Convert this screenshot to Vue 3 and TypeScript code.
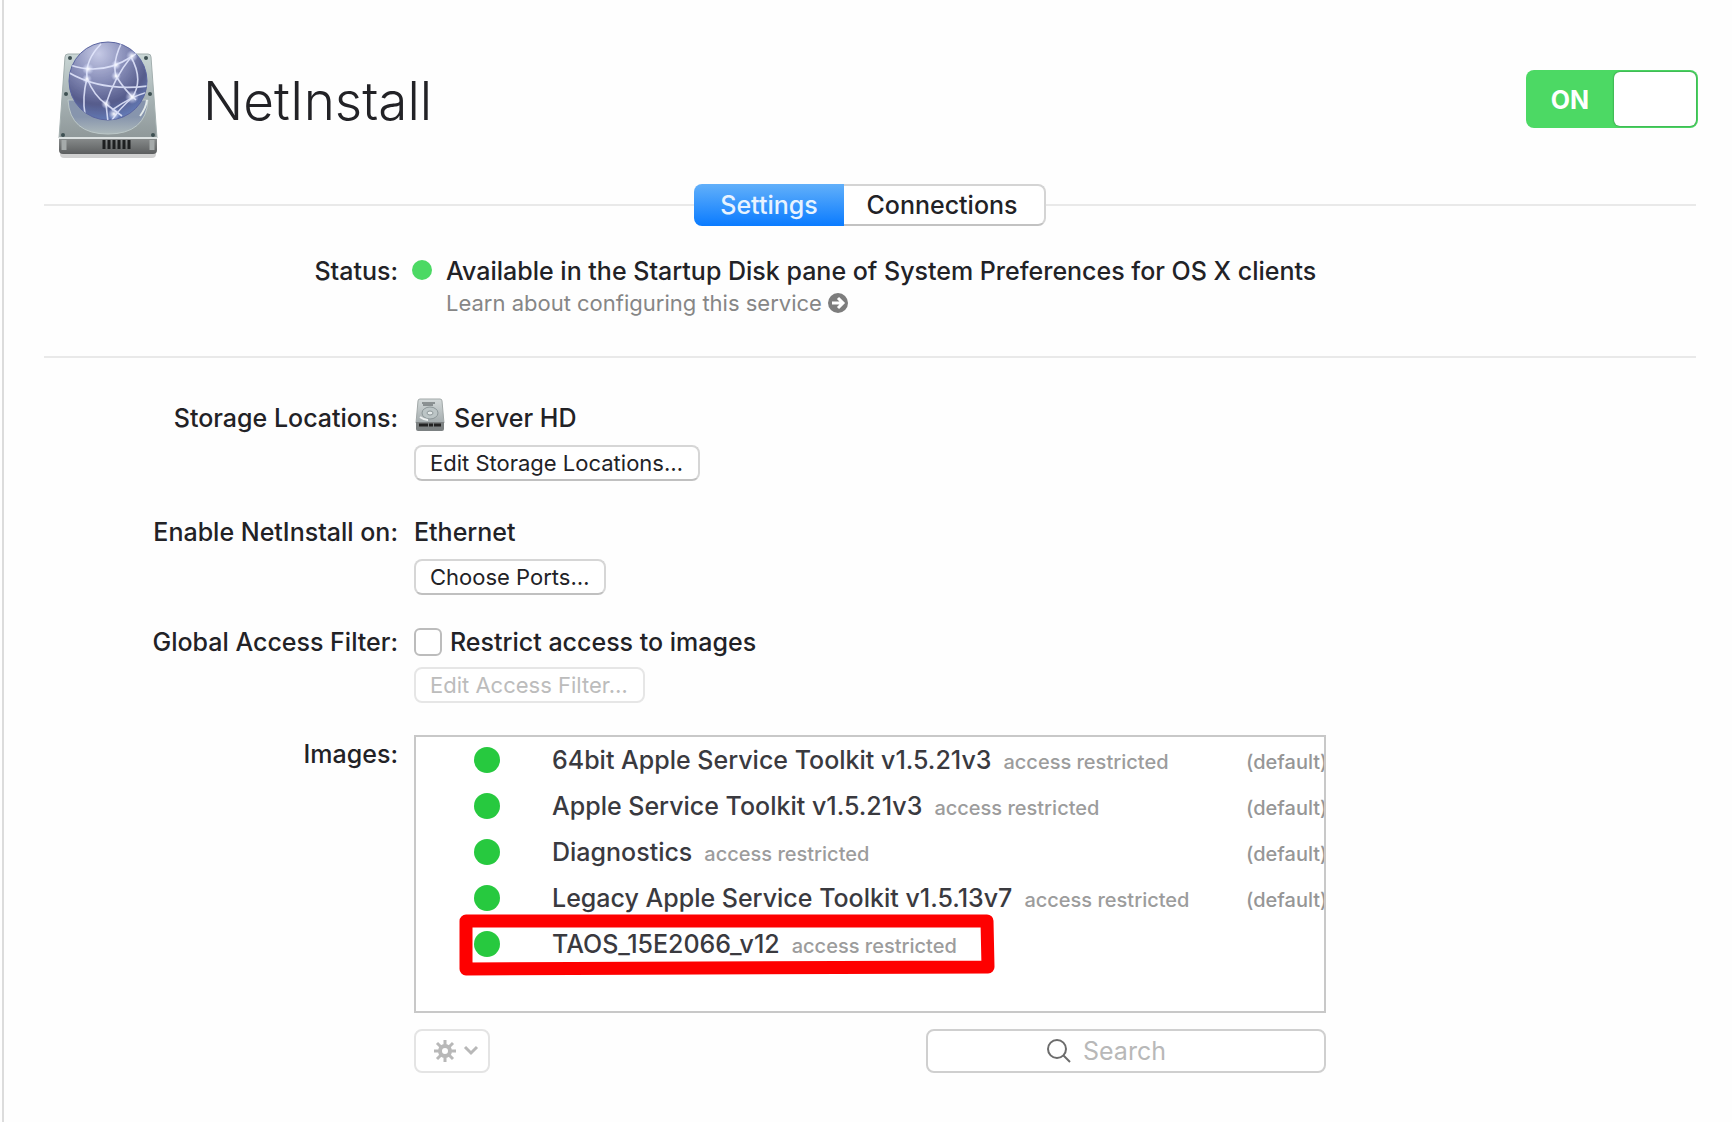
<script setup lang="ts">
import { ref } from 'vue'

interface BootImage {
  name: string
  isDefault: boolean
}

const enabled = ref(true)
const restrict = ref(false)
const query = ref('')
const tab = ref('Settings')
const tabs: string[] = ['Settings', 'Connections']

const images: BootImage[] = [
  { name: '64bit Apple Service Toolkit v1.5.21v3', isDefault: true },
  { name: 'Apple Service Toolkit v1.5.21v3', isDefault: true },
  { name: 'Diagnostics', isDefault: true },
  { name: 'Legacy Apple Service Toolkit v1.5.13v7', isDefault: true },
  { name: 'TAOS_15E2066_v12', isDefault: false },
]
</script>

<template>
  <main class="pane">
    <header class="head">
      <svg class="logo" viewBox="0 0 104 124" aria-hidden="true">
        <defs>
          <linearGradient id="plate" x1="0" y1="0" x2="0" y2="1">
            <stop offset="0" stop-color="#c9d6d5" />
            <stop offset="0.6" stop-color="#a3aeb0" />
            <stop offset="1" stop-color="#8f9899" />
          </linearGradient>
          <linearGradient id="front" x1="0" y1="0" x2="0" y2="1">
            <stop offset="0" stop-color="#8b8f8f" />
            <stop offset="1" stop-color="#5c5e5f" />
          </linearGradient>
          <linearGradient id="ring" x1="0" y1="0" x2="0" y2="1">
            <stop offset="0.5" stop-color="#8795ad" />
            <stop offset="1" stop-color="#adb9bb" />
          </linearGradient>
          <radialGradient id="globe" cx="0.38" cy="0.15" r="0.9">
            <stop offset="0" stop-color="#c6cae6" />
            <stop offset="0.38" stop-color="#8a90ba" />
            <stop offset="0.72" stop-color="#565c8c" />
            <stop offset="1" stop-color="#6680bd" />
          </radialGradient>
          <radialGradient id="spark">
            <stop offset="0" stop-color="#fff" />
            <stop offset="1" stop-color="#cfd8ff" stop-opacity="0" />
          </radialGradient>
          <clipPath id="ball"><circle cx="52" cy="43" r="39" /></clipPath>
        </defs>
        <rect x="4" y="112" width="96" height="8" rx="4" fill="#000" opacity="0.18" />
        <path d="M12 16h80q3 0 3 3l6 81H3l6-81q0-3 3-3z" fill="url(#plate)" stroke="#a3afaf" />
        <path d="M12 62q2 34 40 34t40-34z" fill="url(#ring)" stroke="#bcc8c8" stroke-width="1" />
        <path d="M84 78q6-8 7-16" fill="none" stroke="#e3eaea" stroke-width="2" />
        <path d="M3 99h98v13q0 4-4 4H7q-4 0-4-4z" fill="url(#front)" />
        <path d="M3 100h98" stroke="#dde2e2" stroke-width="2" />
        <path d="M8 102v10M96 102v10" stroke="#a5aaaa" stroke-width="5" />
        <path d="M48 102v9M53 102v9M58 102v9M63 102v9M68 102v9M73 102v9" stroke="#1d1f20" stroke-width="3" />
        <g fill="#3e5052">
          <circle cx="14" cy="20" r="2" /><circle cx="90" cy="20" r="2" />
          <circle cx="10" cy="56" r="2" /><circle cx="94" cy="56" r="2" />
          <circle cx="7" cy="97" r="2" /><circle cx="97" cy="97" r="2" />
        </g>
        <circle cx="52" cy="43" r="39" fill="url(#globe)" stroke="#5a64a0" />
        <g clip-path="url(#ball)" fill="none" stroke="#e6eaff" stroke-width="1.6" opacity="0.85">
          <path d="M14 27Q46 38 75 19Q84 14 84 10" />
          <path d="M10 33Q44 54 92 48" />
          <path d="M45 6Q29 22 31 40Q26 60 29 76" />
          <path d="M66 4Q56 24 60 38Q70 54 80 62" />
          <path d="M75 19Q58 40 50 66L52 84" />
          <path d="M31 40Q38 58 50 66L66 78" />
          <path d="M75 19Q88 42 76 60Q64 70 56 82" />
          <path d="M92 54Q76 58 56 72" />
        </g>
        <g fill="url(#spark)">
          <circle cx="32" cy="31" r="6" /><circle cx="31" cy="41" r="5" />
          <circle cx="76" cy="18" r="6" /><circle cx="60" cy="27" r="5" />
          <circle cx="60" cy="38" r="5" /><circle cx="76" cy="59" r="7" />
          <circle cx="50" cy="66" r="5" /><circle cx="58" cy="76" r="6" />
        </g>
      </svg>
      <h1>NetInstall</h1>
      <label class="switch" :class="{ off: !enabled }">
        <input v-model="enabled" type="checkbox" role="switch" aria-label="NetInstall service" />
        <span class="state">{{ enabled ? 'ON' : 'OFF' }}</span>
        <span class="knob"></span>
      </label>
    </header>

    <nav class="tabs">
      <div class="segments">
        <button
          v-for="t in tabs"
          :key="t"
          type="button"
          :class="{ active: t === tab }"
          @click="tab = t"
        >{{ t }}</button>
      </div>
    </nav>

    <section class="grid status">
      <div class="label">Status:</div>
      <div class="status-body">
        <span class="dot"></span>
        <div>
          <div class="line">Available in the Startup Disk pane of System Preferences for OS X clients</div>
          <a class="learn" href="#">Learn about configuring this service<svg viewBox="0 0 20 20" aria-hidden="true">
            <circle cx="10" cy="10" r="10" fill="#7d7d7d" />
            <path d="M4 10h10M10 5l5 5-5 5" fill="none" stroke="#fff" stroke-width="3" />
          </svg></a>
        </div>
      </div>
    </section>

    <section class="grid form">
      <div class="label">Storage Locations:</div>
      <div class="field">
        <div class="line disk">
          <svg viewBox="0 0 30 34" aria-hidden="true">
            <defs>
              <linearGradient id="hd" x1="0" y1="0" x2="0" y2="1">
                <stop offset="0" stop-color="#d4dada" />
                <stop offset="1" stop-color="#a3abad" />
              </linearGradient>
            </defs>
            <path d="M5 1h20q2 0 2 2l2 22H1L3 3q0-2 2-2z" fill="url(#hd)" stroke="#a2a9a9" />
            <path d="M1 24h28v7q0 2-2 2H3q-2 0-2-2z" fill="#7c8182" />
            <path d="M4 27h22" stroke="#222" stroke-width="3" stroke-dasharray="9 1 4 1" />
            <path d="M7 5h13M8 7h10" stroke="#4b5152" stroke-width="1" />
            <ellipse cx="15" cy="15" rx="8" ry="6" fill="#bcc5c6" stroke="#8c9698" />
            <ellipse cx="15" cy="15" rx="3" ry="2" fill="#e6ebeb" stroke="#8c9698" />
            <path d="M5 19q4 3 8 3" fill="none" stroke="#eef1f1" stroke-width="2" />
          </svg>
          <span>Server HD</span>
        </div>
        <button type="button" class="push">Edit Storage Locations…</button>
      </div>

      <div class="label">Enable NetInstall on:</div>
      <div class="field tight">
        <div class="line">Ethernet</div>
        <button type="button" class="push">Choose Ports…</button>
      </div>

      <div class="label">Global Access Filter:</div>
      <div class="field filter">
        <label class="line check">
          <input v-model="restrict" type="checkbox" />
          <span>Restrict access to images</span>
        </label>
        <button type="button" class="push" :disabled="!restrict">Edit Access Filter…</button>
      </div>

      <div class="label images-label">Images:</div>
      <div class="images">
        <div class="list">
          <table>
            <tbody>
              <tr v-for="image in images" :key="image.name">
                <td class="mark"><span class="bullet"></span></td>
                <td class="name">{{ image.name }}<small>access restricted</small></td>
                <td class="default">
                  <template v-if="image.isDefault">(default)</template>
                </td>
              </tr>
            </tbody>
          </table>
          <svg class="highlight" viewBox="0 0 536 62" aria-hidden="true">
            <path d="M7 7L528 7L529 53L7 55Z" fill="none" stroke="#fe0000" stroke-width="13" stroke-linejoin="round" />
          </svg>
        </div>
        <div class="tools">
          <button type="button" class="gear" aria-label="Actions" disabled>
            <svg viewBox="0 0 46 22" aria-hidden="true">
              <g stroke="#b8b8b8" fill="none">
                <circle cx="11" cy="11" r="5" stroke-width="4" />
                <g stroke-width="3">
                  <path d="M11 0v5M11 17v5M0 11h5M17 11h5M3 3l4 4M15 15l4 4M3 19l4-4M15 7l4-4" />
                </g>
                <path d="M31 7l6 6 6-6" stroke-width="3" />
              </g>
            </svg>
          </button>
          <label class="search">
            <svg viewBox="0 0 24 24" aria-hidden="true">
              <circle cx="10" cy="10" r="9" fill="none" stroke="#6c6c6c" stroke-width="2" />
              <path d="M16 16l7 7" stroke="#6c6c6c" stroke-width="2" />
            </svg>
            <input v-model="query" type="text" placeholder="Search" aria-label="Search images" />
          </label>
        </div>
      </div>
    </section>
  </main>
</template>

<style>
body {
  margin: 0;
  background: #fefefe;
}
</style>

<style scoped>
.pane {
  box-sizing: border-box;
  min-height: 100vh;
  margin-left: 2px;
  padding: 40px 36px 40px 40px;
  border-left: 2px solid #dcdcdc;
  font-family: Inter, "Liberation Sans", sans-serif;
  font-size: 25px;
  font-weight: 500;
  line-height: 32px;
  color: #222226;
}
button, input {
  font-family: inherit;
  font-weight: inherit;
  color: inherit;
}
.head {
  display: flex;
  align-items: center;
  height: 120px;
}
.logo {
  width: 104px;
  height: 124px;
  margin: 0 43px 0 12px;
}
h1 {
  margin: 0;
  padding-top: 2px;
  font-size: 53px;
  font-weight: 300;
  line-height: 64px;
}
.switch {
  position: relative;
  display: flex;
  box-sizing: border-box;
  width: 172px;
  height: 58px;
  margin: 0 -2px 2px auto;
  padding: 2px;
  border-radius: 8px;
  background: #4cd964;
}
.switch.off {
  flex-direction: row-reverse;
  background: #bbb;
}
.switch input {
  position: absolute;
  inset: 0;
  width: 100%;
  height: 100%;
  margin: 0;
  opacity: 0;
}
.state {
  flex: 1;
  padding-right: 2px;
  color: #fff;
  font-weight: 700;
  line-height: 56px;
  text-align: center;
}
.knob {
  width: 82px;
  border-radius: 6px;
  background: #fff;
  box-shadow: 0 0 2px rgba(0, 0, 0, 0.5);
}
.tabs {
  display: flex;
  align-items: center;
  margin-top: 24px;
}
.tabs::before,
.tabs::after {
  content: "";
  flex: 1;
  height: 2px;
  background: #e9e9e9;
}
.segments {
  display: flex;
  height: 42px;
}
.segments button {
  box-sizing: border-box;
  width: 202px;
  padding: 0 4px 0 0;
  border: 2px solid #d4d4d4;
  border-bottom-color: #c2c2c2;
  border-left: 0;
  border-radius: 0 8px 8px 0;
  background: #fff;
  font-size: 25px;
}
.segments .active {
  width: 150px;
  padding: 0;
  border: 0;
  border-radius: 8px 0 0 8px;
  background: linear-gradient(#62b0fa, #0a7bff);
  color: #e8f3ff;
}
.grid {
  display: grid;
  grid-template-columns: 354px minmax(0, 912px);
  column-gap: 16px;
}
.label {
  text-align: right;
}
.status {
  margin-top: 29px;
  padding-bottom: 37px;
  border-bottom: 2px solid #e9e9e9;
}
.status-body {
  display: flex;
  gap: 14px;
  margin-left: -2px;
}
.dot {
  flex: none;
  width: 20px;
  height: 20px;
  margin-top: 5px;
  border-radius: 50%;
  background: #4cd964;
}
.learn {
  display: flex;
  align-items: center;
  gap: 6px;
  color: #868686;
  font-size: 22px;
  font-weight: 400;
  text-decoration: none;
}
.learn svg {
  width: 20px;
  height: 20px;
}
.form {
  margin-top: 44px;
}
.field {
  display: flex;
  flex-direction: column;
  align-items: flex-start;
  gap: 11px;
  margin-bottom: 35px;
}
.field.tight {
  margin-bottom: 31px;
}
.field.filter {
  gap: 9px;
  margin-bottom: 32px;
}
.disk {
  display: flex;
  gap: 9px;
}
.disk svg {
  width: 30px;
  height: 34px;
  margin: -4px 0 0 1px;
}
.push {
  box-sizing: border-box;
  height: 36px;
  padding: 0 15px 0 14px;
  border: 2px solid #d6d6d6;
  border-bottom-color: #c0c0c0;
  border-radius: 8px;
  background: #fff;
  font-size: 22px;
  font-weight: 400;
  color: #222226;
}
.push:disabled {
  border-color: #e6e6e6;
  color: #bcbcbc;
}
.check {
  display: flex;
  align-items: center;
  gap: 8px;
}
.check input {
  appearance: none;
  box-sizing: border-box;
  width: 28px;
  height: 28px;
  margin: 0;
  border: 2px solid #bcbcbc;
  border-radius: 6px;
  background: #fff;
}
.check input:checked {
  background: #0a7bff;
}
.images-label {
  padding-top: 3px;
}
.list {
  position: relative;
  height: 274px;
  border: 2px solid #c8c8c8;
  background: #fff;
  overflow: hidden;
}
table {
  width: 100%;
  border-collapse: collapse;
  table-layout: fixed;
}
td {
  box-sizing: border-box;
  height: 46px;
  padding: 0;
  white-space: nowrap;
}
.mark {
  width: 136px;
}
.bullet {
  display: block;
  width: 26px;
  height: 26px;
  margin-left: 58px;
  border-radius: 50%;
  background: #27c93f;
}
.name {
  padding-top: 2px;
  color: #3a3a3f;
}
small {
  margin-left: 12px;
  font-size: 20px;
  color: #9c9c9c;
}
.default {
  width: 78px;
  padding-top: 4px;
  font-size: 20px;
  color: #969696;
}
.highlight {
  position: absolute;
  left: 43px;
  top: 177px;
  width: 536px;
  height: 62px;
}
.tools {
  display: flex;
  justify-content: space-between;
  margin-top: 16px;
}
.gear {
  box-sizing: border-box;
  width: 76px;
  height: 44px;
  padding: 0 10px 0 18px;
  border: 2px solid #e4e4e4;
  border-radius: 8px;
  background: #fff;
}
.gear svg {
  display: block;
  width: 46px;
  height: 22px;
}
.search {
  display: flex;
  box-sizing: border-box;
  align-items: center;
  justify-content: center;
  gap: 12px;
  width: 400px;
  height: 44px;
  border: 2px solid #cfcfcf;
  border-radius: 8px;
  background: #fff;
}
.search svg {
  width: 24px;
  height: 24px;
}
.search input {
  width: 122px;
  padding: 0;
  border: 0;
  outline: 0;
  background: none;
  font-size: 25px;
  font-weight: 400;
}
.search input::placeholder {
  color: #b8b8b8;
}
</style>
